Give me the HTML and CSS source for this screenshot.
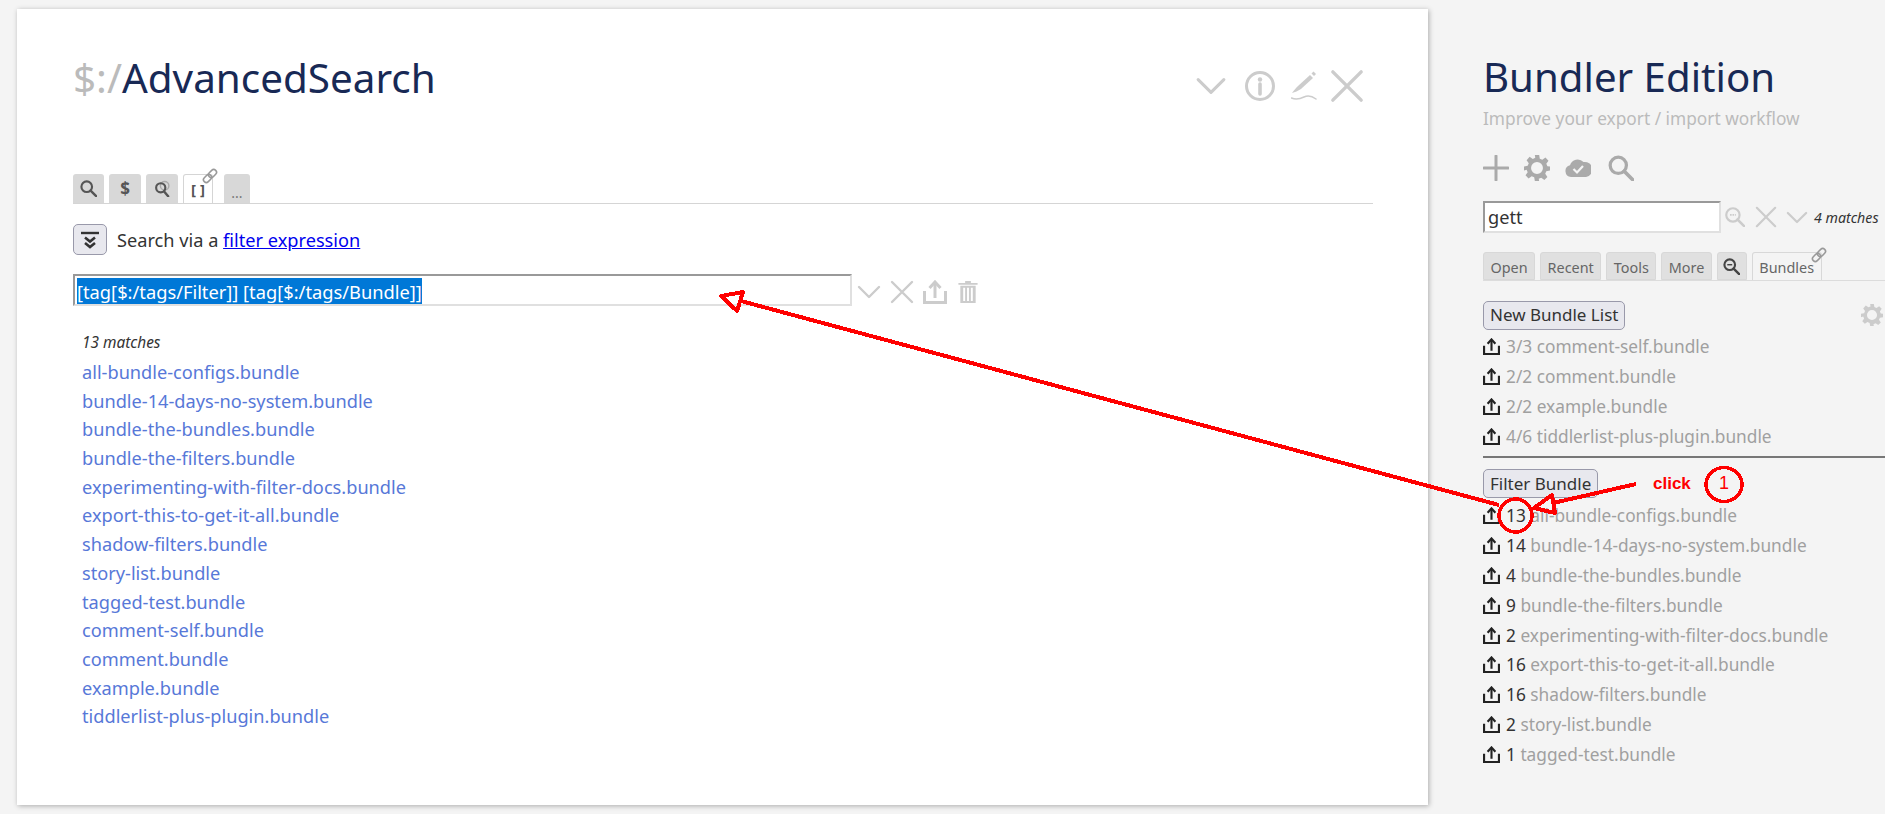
FILE: index.html
```html
<!DOCTYPE html>
<html lang="en">
<head>
    <meta charset="UTF-8">
    <title>$:/AdvancedSearch - Bundler Edition</title>
    <link rel="stylesheet" href="styles.css">
</head>
<body>
    <svg width="0" height="0" class="defs">
        <symbol id="i-search" viewBox="0 0 24 24"><circle cx="9.5" cy="9.5" r="7.5" fill="none" stroke="currentColor" stroke-width="3"/><path d="M15 15l8 8" stroke="currentColor" stroke-width="3.4" stroke-linecap="round"/></symbol>
        <symbol id="i-close" viewBox="0 0 24 24"><path d="M2 2l20 20M22 2L2 22" stroke="currentColor" stroke-width="2.4" stroke-linecap="round"/></symbol>
        <symbol id="i-down" viewBox="0 0 24 14"><path d="M2 2l10 10L22 2" fill="none" stroke="currentColor" stroke-width="2.4" stroke-linecap="round" stroke-linejoin="round"/></symbol>
        <symbol id="i-gear" viewBox="0 0 24 24"><path fill="currentColor" fill-rule="evenodd" d="M10 0h4l.6 3.4 2.3 1 2.9-2 2.8 2.8-2 2.9 1 2.300L24 10.600v3.800l-3.400.6-1 2.300 2 2.900-2.800 2.800-2.900-2-2.300 1L14 24h-4l-.6-3.400-2.300-1-2.900 2-2.800-2.800 2-2.900-1-2.300L0 14.400v-3.800l3.400-.6 1-2.300-2-2.900L5.200 1.600l2.900 2 2.300-1zM12 6.500a5.500 5.500 0 1 0 0 11 5.500 5.500 0 0 0 0-11z"/></symbol>
        <symbol id="i-export" viewBox="0 0 24 24"><path d="M1.500 11v11.500h21V11" fill="none" stroke="currentColor" stroke-width="3"/><path d="M12 18V3" stroke="currentColor" stroke-width="3"/><path d="M6.500 8L12 2l5.500 6" fill="none" stroke="currentColor" stroke-width="3"/></symbol>
        <symbol id="i-link" viewBox="0 0 16 16"><g fill="none" stroke="currentColor" stroke-width="1.600" transform="rotate(-45 8 8)"><rect x="0" y="5.200" width="9" height="5.600" rx="2.800"/><rect x="7" y="5.200" width="9" height="5.600" rx="2.800"/></g></symbol>
    </svg>

    <main class="story">
        <article class="tiddler">
            <header class="tiddler-head">
                <h2 class="tiddler-title"><span class="title-prefix">$:/</span>AdvancedSearch</h2>
                <div class="tiddler-controls">
                    <svg class="ctl ctl-down"><use href="#i-down"/></svg>
                    <svg class="ctl ctl-info" viewBox="0 0 32 32"><circle cx="16" cy="16" r="13.500" fill="none" stroke="currentColor" stroke-width="3"/><circle cx="16" cy="9.500" r="2.200" fill="currentColor"/><path d="M16 14v10" stroke="currentColor" stroke-width="3.600" stroke-linecap="round"/></svg>
                    <svg class="ctl ctl-edit" viewBox="0 0 26 30"><path d="M1 22C3 19 5 17 7 15L19 4l3 3-12 11C7 20 4 21 1 22z" fill="currentColor"/><path d="M20.500 2.500l2-2L25 3l-2 2z" fill="currentColor"/><path d="M.5 27c4.500 2 8.500 1 12.500-1s8-1 12 2" fill="none" stroke="currentColor" stroke-width="1.500" stroke-linecap="round"/></svg>
                    <svg class="ctl ctl-close"><use href="#i-close"/></svg>
                </div>
            </header>

            <div class="tabs big-tabs">
                <span class="tab tab-a"><svg class="tab-icon"><use href="#i-search"/></svg></span>
                <span class="tab tab-b">$</span>
                <span class="tab tab-c"><svg class="tab-icon" viewBox="0 0 24 24"><circle cx="15" cy="8" r="6" fill="none" stroke="#aaa" stroke-width="2"/><circle cx="9.500" cy="11" r="6.500" fill="none" stroke="currentColor" stroke-width="3"/><path d="M14 16l6 7" stroke="currentColor" stroke-width="3.400" stroke-linecap="round"/></svg></span>
                <span class="tab tab-d active">[ ]<svg class="pin"><use href="#i-link"/></svg></span>
                <span class="tab tab-e">...</span>
            </div>

            <div class="intro">
                <button class="collapse-btn"><svg viewBox="0 0 20 20" width="20" height="20"><path d="M1 3h18" stroke="#333" stroke-width="2.400"/><path d="M5 7.500l5 4 5-4M5 13l5 4 5-4" fill="none" stroke="#333" stroke-width="2.600"/></svg></button>
                <span>Search via a <a href="#">filter expression</a></span>
            </div>

            <div class="filter-row">
                <div class="field field-wide"><span class="selected">[tag[$:/tags/Filter]] [tag[$:/tags/Bundle]]</span></div>
                <svg class="fi fi-down"><use href="#i-down"/></svg>
                <svg class="fi fi-close"><use href="#i-close"/></svg>
                <svg class="fi fi-export"><use href="#i-export"/></svg>
                <svg class="fi fi-trash" viewBox="0 0 20 24"><path fill="currentColor" d="M0 3h7V1h6v2h7v2H0zM2 6h16v18H2zM5 8v14h2V8zM9 8v14h2V8zM13 8v14h2V8z" fill-rule="evenodd"/></svg>
            </div>

            <div class="results">
                <div class="count">13 matches</div>
                <a href="#">all-bundle-configs.bundle</a>
                <a href="#">bundle-14-days-no-system.bundle</a>
                <a href="#">bundle-the-bundles.bundle</a>
                <a href="#">bundle-the-filters.bundle</a>
                <a href="#">experimenting-with-filter-docs.bundle</a>
                <a href="#">export-this-to-get-it-all.bundle</a>
                <a href="#">shadow-filters.bundle</a>
                <a href="#">story-list.bundle</a>
                <a href="#">tagged-test.bundle</a>
                <a href="#">comment-self.bundle</a>
                <a href="#">comment.bundle</a>
                <a href="#">example.bundle</a>
                <a href="#">tiddlerlist-plus-plugin.bundle</a>
            </div>
        </article>
    </main>

    <aside class="sidebar">
        <h1 class="site-title">Bundler Edition</h1>
        <div class="site-sub">Improve your export / import workflow</div>

        <div class="page-controls">
            <svg class="pc pc-plus" viewBox="0 0 26 26"><path d="M13 1v24M1 13h24" stroke="currentColor" stroke-width="3" stroke-linecap="round"/></svg>
            <svg class="pc pc-gear"><use href="#i-gear"/></svg>
            <svg class="pc pc-cloud" viewBox="0 0 26 18"><path fill="currentColor" d="M6 18a6 6 0 0 1-1-11.800A8 8 0 0 1 18.500 3 6 6 0 0 1 21 18z"/><path d="M8.500 10l3.500 3.500L18 7" fill="none" stroke="#f4f4f4" stroke-width="2.200"/></svg>
            <svg class="pc pc-search"><use href="#i-search"/></svg>
        </div>

        <div class="search-row">
            <div class="field field-side">gett</div>
            <svg class="si si-search" viewBox="0 0 24 24"><circle cx="9.500" cy="9.500" r="8" fill="none" stroke="currentColor" stroke-width="2.600"/><path d="M15 15l8 8" stroke="currentColor" stroke-width="3" stroke-linecap="round"/><path d="M6 9.500h7" stroke="currentColor" stroke-width="2" stroke-dasharray="2 1"/></svg>
            <svg class="si si-close"><use href="#i-close"/></svg>
            <svg class="si si-down"><use href="#i-down"/></svg>
            <span class="side-count">4 matches</span>
        </div>

        <div class="tabs side-tabs">
            <span class="tab">Open</span>
            <span class="tab">Recent</span>
            <span class="tab">Tools</span>
            <span class="tab">More</span>
            <span class="tab tab-lens"><svg class="tab-icon" viewBox="0 0 24 24"><circle cx="9.500" cy="9.500" r="7.500" fill="none" stroke="currentColor" stroke-width="3"/><path d="M15 15l8 8" stroke="currentColor" stroke-width="3.400" stroke-linecap="round"/><path d="M6 9.500h7" stroke="currentColor" stroke-width="2"/></svg></span>
            <span class="tab active">Bundles<svg class="pin"><use href="#i-link"/></svg></span>
        </div>

        <section class="bundle-group">
            <div class="group-head">
                <button class="plain-btn">New Bundle List</button>
                <svg class="group-gear"><use href="#i-gear"/></svg>
            </div>
            <div class="bundle-row"><svg><use href="#i-export"/></svg><span class="num">3/3</span> comment-self.bundle</div>
            <div class="bundle-row"><svg><use href="#i-export"/></svg><span class="num">2/2</span> comment.bundle</div>
            <div class="bundle-row"><svg><use href="#i-export"/></svg><span class="num">2/2</span> example.bundle</div>
            <div class="bundle-row"><svg><use href="#i-export"/></svg><span class="num">4/6</span> tiddlerlist-plus-plugin.bundle</div>
        </section>

        <hr class="divider">

        <section class="bundle-group">
            <div class="group-head">
                <button class="plain-btn">Filter Bundle</button>
            </div>
            <div class="bundle-row"><svg><use href="#i-export"/></svg><span class="num dark">13</span> all-bundle-configs.bundle</div>
            <div class="bundle-row"><svg><use href="#i-export"/></svg><span class="num dark">14</span> bundle-14-days-no-system.bundle</div>
            <div class="bundle-row"><svg><use href="#i-export"/></svg><span class="num dark">4</span> bundle-the-bundles.bundle</div>
            <div class="bundle-row"><svg><use href="#i-export"/></svg><span class="num dark">9</span> bundle-the-filters.bundle</div>
            <div class="bundle-row"><svg><use href="#i-export"/></svg><span class="num dark">2</span> experimenting-with-filter-docs.bundle</div>
            <div class="bundle-row"><svg><use href="#i-export"/></svg><span class="num dark">16</span> export-this-to-get-it-all.bundle</div>
            <div class="bundle-row"><svg><use href="#i-export"/></svg><span class="num dark">16</span> shadow-filters.bundle</div>
            <div class="bundle-row"><svg><use href="#i-export"/></svg><span class="num dark">2</span> story-list.bundle</div>
            <div class="bundle-row"><svg><use href="#i-export"/></svg><span class="num dark">1</span> tagged-test.bundle</div>
        </section>
    </aside>

    <!-- annotation drawn on top of the screenshot -->
    <svg class="markup" viewBox="0 0 1885 814" width="1885" height="814" shape-rendering="crispEdges">
        <g fill="none" stroke="#f00" stroke-width="4" stroke-linejoin="round">
            <ellipse cx="1724" cy="484.500" rx="18" ry="17" stroke-width="3.500"/>
            <ellipse cx="1515.500" cy="515.500" rx="16.500" ry="16.500" stroke-width="3.500"/>
            <path d="M1636 484l-83 19"/>
            <path d="M1534 508l18-13 3 18z"/>
            <path d="M1499 505L741 301"/>
            <path d="M721 296l22-4-6 19z"/>
        </g>
    </svg>
    <div class="markup-text click">click</div>
    <div class="markup-text one">1</div>
</body>
</html>
```

FILE: styles.css
```css
body {
    margin: 0;
    height: 814px;
    overflow: hidden;
    background: #f4f4f4;
    color: #333;
    font-family: "Noto Sans", sans-serif;
    font-size: 18.2px;
    display: flex;
    position: relative;
}

.defs {
    position: absolute;
}

svg {
    display: block;
}

.story {
    padding: 9px 0 0 17px;
    width: 1482px;
    box-sizing: border-box;
    flex: none;
}

.tiddler {
    width: 1411px;
    height: 796px;
    box-sizing: border-box;
    background: #fff;
    box-shadow: 1px 1px 5px rgba(0, 0, 0, 0.3);
    padding: 0 55px 0 56px;
}

.tiddler-head {
    display: flex;
    justify-content: space-between;
    height: 165px;
}

.tiddler-title {
    margin: 35px 0 0;
    font-weight: 400;
    font-size: 40.4px;
    line-height: 68px;
    color: #182955;
}

.title-prefix {
    color: #bbb;
}

.tiddler-controls {
    display: flex;
    align-items: center;
    height: 34px;
    margin-top: 60px;
    margin-right: 9px;
    color: #ccc;
}

.ctl-down { width: 32px; height: 18px; }
.ctl-info { width: 32px; height: 32px; margin-left: 17px; }
.ctl-edit { width: 26px; height: 30px; margin-left: 15px; }
.ctl-close { width: 34px; height: 34px; margin-left: 13px; }

.tabs {
    display: flex;
    align-items: flex-end;
    border-bottom: 1px solid #d5d5d5;
}

.tab {
    display: block;
    position: relative;
    box-sizing: border-box;
    background: #d8d8d8;
    border-radius: 3px 3px 0 0;
    color: #555;
    text-align: center;
}

.tab.active {
    background: #fff;
    border: 1px solid #d5d5d5;
    border-bottom: none;
}

.tab-icon {
    width: 17px;
    height: 17px;
}

.pin {
    position: absolute;
    width: 16px;
    height: 16px;
    color: #999;
}

.big-tabs {
    height: 29px;
    gap: 5px;
}

.big-tabs .tab {
    height: 29px;
    width: 31px;
    font-weight: 700;
    font-size: 15px;
    line-height: 29px;
    display: flex;
    align-items: center;
    justify-content: center;
}

.big-tabs .tab-b { width: 32px; font-size: 17px; }
.big-tabs .tab-c { width: 32px; }
.big-tabs .tab-d { width: 30px; }

.big-tabs .tab-e {
    width: 26px;
    margin-left: 6px;
    font-weight: 400;
    font-size: 14px;
    padding-top: 7px;
    color: #777;
}

.big-tabs .pin {
    top: -7px;
    right: -6px;
}

.intro {
    display: flex;
    align-items: center;
    gap: 10px;
    margin-top: 20px;
}

.collapse-btn {
    width: 34px;
    height: 31px;
    padding: 0;
    display: flex;
    align-items: center;
    justify-content: center;
    background: #e8e8ee;
    border: 1px solid #99a;
    border-radius: 5px;
}

a {
    color: #0000ee;
}

.filter-row {
    display: flex;
    align-items: center;
    margin-top: 19px;
    color: #ccc;
}

.field {
    box-sizing: border-box;
    background: #fff;
    border: 2px solid;
    border-color: #999 #e0e0e0 #e0e0e0 #999;
    color: #333;
}

.field-wide {
    width: 779px;
    height: 32px;
    padding: 2px 2px;
    font-size: 18.3px;
}

.selected {
    background: #0078d7;
    color: #fff;
    display: inline-block;
    vertical-align: top;
    padding-top: 2px;
    line-height: 24px;
}

.fi { flex: none; margin-top: 3px; }
.fi-down { width: 24px; height: 14px; margin-left: 5px; }
.fi-close { width: 24px; height: 24px; margin-left: 9px; }
.fi-export { width: 24px; height: 24px; margin-left: 9px; }
.fi-trash { width: 20px; height: 23px; margin-left: 11px; }

.results {
    padding: 24px 0 0 9px;
}

.results .count {
    font-style: italic;
    font-size: 15.4px;
    line-height: 26px;
    margin-bottom: 2px;
}

.results a {
    display: block;
    height: 28.7px;
    line-height: 28.7px;
    color: #5778d8;
    text-decoration: none;
}

.sidebar {
    flex: none;
    width: 403px;
    padding-left: 1px;
    box-sizing: border-box;
}

.site-title {
    margin: 53px 0 0;
    font-weight: 400;
    font-size: 40.2px;
    line-height: 48px;
    color: #182955;
}

.site-sub {
    color: #bbb;
    font-size: 17.3px;
    line-height: 24px;
    margin-top: 6px;
}

.page-controls {
    display: flex;
    align-items: center;
    height: 28px;
    margin-top: 23px;
    gap: 15px;
    color: #aaa;
}

.pc-plus { width: 26px; height: 26px; }
.pc-gear { width: 26px; height: 26px; }
.pc-cloud { width: 26px; height: 18px; }
.pc-search { width: 26px; height: 26px; margin-left: 2px; }

.search-row {
    display: flex;
    align-items: center;
    height: 32px;
    margin-top: 19px;
    color: #ccc;
}

.field-side {
    width: 238px;
    height: 32px;
    padding: 0 3px;
    line-height: 28px;
}

.si { flex: none; }
.si-search { width: 20px; height: 20px; margin-left: 4px; }
.si-close { width: 22px; height: 22px; margin-left: 10px; }
.si-down { width: 22px; height: 13px; margin-left: 9px; }

.side-count {
    font-style: italic;
    font-size: 14.2px;
    color: #333;
    margin-left: 6px;
    white-space: nowrap;
}

.side-tabs {
    height: 28px;
    margin-top: 19px;
    gap: 5px;
    border-bottom: 1px solid #dcdcdc;
}

.side-tabs .tab {
    height: 28px;
    padding: 0 6.5px;
    font-size: 14.4px;
    line-height: 29px;
    border: 1px solid #d8d8d8;
    background: #e0e0e0;
    color: #666;
}

.side-tabs .tab.active {
    background: #f4f4f4;
    border-bottom: none;
}

.side-tabs .tab-lens {
    width: 30px;
    padding: 0;
    display: flex;
    align-items: center;
    justify-content: center;
    color: #444;
}

.side-tabs .pin {
    top: -6px;
    right: -6px;
}

.group-head {
    display: flex;
    align-items: center;
    justify-content: space-between;
    height: 34px;
}

.bundle-group:first-of-type {
    margin-top: 17px;
}

.plain-btn {
    font: inherit;
    font-size: 17px;
    color: #333;
    height: 29px;
    padding: 0 6px;
    background: #e8e8ee;
    border: 1px solid #99a;
    border-radius: 5px;
    line-height: 24px;
}

.group-gear {
    width: 22px;
    height: 22px;
    margin-right: 2px;
    color: #ccc;
}

.bundle-row {
    display: flex;
    align-items: center;
    height: 29.9px;
    color: #a0a0a0;
    font-size: 17.3px;
    white-space: pre;
}

.bundle-row svg {
    width: 17px;
    height: 17px;
    color: #222;
    margin-right: 6px;
    flex: none;
}

.num.dark {
    color: #333;
}

.divider {
    border: none;
    border-top: 2px solid #777;
    margin: 4px 0 9px;
}

.markup {
    position: absolute;
    left: 0;
    top: 0;
}

.markup-text {
    position: absolute;
    color: #f00;
    font-family: "Liberation Sans", sans-serif;
    font-weight: 700;
    font-size: 17px;
}

.click {
    left: 1653px;
    top: 474px;
}

.one {
    left: 1719px;
    top: 473px;
    font-weight: 400;
    font-size: 18px;
}
```
